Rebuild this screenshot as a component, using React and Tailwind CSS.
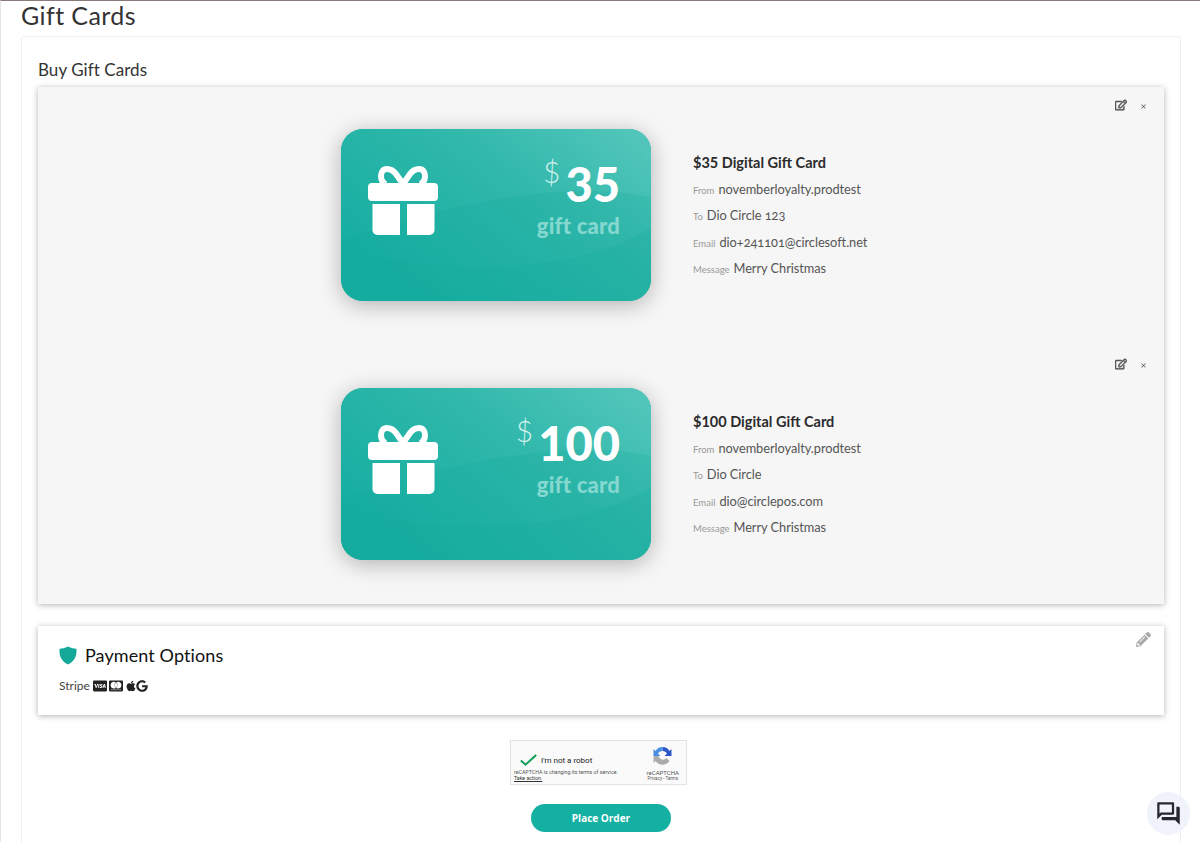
import { FaApple, FaCcMastercard, FaCcVisa, FaGoogle, FaPencilAlt, FaRegEdit } from 'react-icons/fa';
import { MdOutlineQuestionAnswer } from 'react-icons/md';
import { HiX } from 'react-icons/hi';

const cards = [
  { id: 'a', amount: '35', to: 'Dio Circle 123', email: 'dio+241101@circlesoft.net' },
  { id: 'b', amount: '100', to: 'Dio Circle', email: 'dio@circlepos.com' },
];

function InfoLine({ label, value }) {
  return (
    <p className="flex h-[26.3px] items-baseline gap-[4px] text-[12.8px] leading-[26.3px] tracking-[-0.05px] text-[#555]">
      <span className="text-[9.5px] tracking-normal text-[#999]">{label}</span>
      <span className="oldstyle-nums">{value}</span>
    </p>
  );
}

function GiftIcon() {
  return (
    <svg className="absolute left-[27px] top-[37px]" width="70" height="70" viewBox="0 0 70 70" fill="#ffffff">
      <rect x="0" y="17" width="70" height="18" rx="4" />
      <path d="M4.500 38H32V69H9.500A5 5 0 0 1 4.500 64Z" />
      <path d="M39 38H66.500V64A5 5 0 0 1 61.500 69H39Z" />
      <path d="M35 18L28 8C25 4 21 3 19 3C15 3 13 6 13 10C13 14 15 17 18 18" fill="none" stroke="#ffffff" strokeWidth="6" />
      <path d="M35 18L42 8C45 4 49 3 51 3C55 3 57 6 57 10C57 14 55 17 52 18" fill="none" stroke="#ffffff" strokeWidth="6" />
    </svg>
  );
}

function CardArt({ id, amount }) {
  return (
    <div className="relative h-[172px] w-[310px] shrink-0 overflow-hidden rounded-[22px] bg-[#14b0a2] shadow-[0_4px_22px_rgba(0,0,0,0.28)]">
      <svg className="absolute inset-0" width="310" height="172" viewBox="0 0 310 172">
        <defs>
          <linearGradient id={`g-${id}`} x1="0" y1="0.7" x2="1" y2="0">
            <stop offset="0" stopColor="#14aea1" />
            <stop offset="0.55" stopColor="#30b8ab" />
            <stop offset="1" stopColor="#56c7bc" />
          </linearGradient>
        </defs>
        <rect width="310" height="172" fill={`url(#g-${id})`} />
        <path d="M0 112C60 90 150 66 230 62C265 61 290 64 310 68V99C280 118 230 134 170 137C120 140 60 136 0 122Z" fill="#12a99c" fillOpacity="0.22" />
        <path d="M0 122C60 136 120 140 170 137C230 134 280 118 310 99V172H0Z" fill="#12a99c" fillOpacity="0.42" />
      </svg>
      <GiftIcon />
      <div className="absolute right-[31px] top-[31px] flex flex-col items-end text-white">
        <div className="flex items-start">
          <span className="-mt-[7px] mr-[5px] text-[30px] font-light leading-[36px] text-[#d5f2ee]">$</span>
          <span className="text-[47px] font-black leading-[49px]">{amount}</span>
        </div>
        <span className="mt-[2px] text-[22px] font-black leading-[30px] tracking-[0.2px] text-[#85d8cf]">gift card</span>
      </div>
    </div>
  );
}

function CardRow({ id, amount, to, email }) {
  return (
    <div className="h-[259px]">
      <div className="flex h-[42px] items-start justify-end gap-[13px] pr-[17px] pt-[12px] text-[#555]">
        <FaRegEdit size={12} stroke="currentColor" strokeWidth={24} />
        <HiX size={7} className="mt-[4px]" />
      </div>
      <div className="flex pl-[303px]">
        <CardArt id={id} amount={amount} />
        <div className="ml-[42px] pt-[24px]">
          <h3 className="mb-[3px] text-[14.5px] font-bold leading-[20px] text-[#2b2b2b]">${amount} Digital Gift Card</h3>
          <InfoLine label="From" value="novemberloyalty.prodtest" />
          <InfoLine label="To" value={to} />
          <InfoLine label="Email" value={email} />
          <InfoLine label="Message" value="Merry Christmas" />
        </div>
      </div>
    </div>
  );
}

function Captcha() {
  return (
    <div className="ml-[472px] flex h-[45px] w-[177px] justify-between border border-[#e2e2e2] bg-[#fafafa] pl-[3px] pr-[7px] pt-[5px] font-['Roboto',sans-serif]">
      <div>
        <div className="mt-[5px] flex items-center pl-[6px]">
          <svg width="17" height="14" viewBox="0 0 20 15">
            <path d="M1 8l5.500 5L19 1.500" fill="none" stroke="#0f9d58" strokeWidth="2.400" />
          </svg>
          <span className="ml-[4px] mt-[3px] text-[8px] leading-[14px] text-[#222]">I'm not a robot</span>
        </div>
        <p className="mt-[1px] text-[5.25px] leading-[6px] text-[#555]">reCAPTCHA is changing its terms of service.</p>
        <p className="text-[5.25px] leading-[6px] text-[#333] underline">Take action.</p>
      </div>
      <div className="flex flex-col items-center">
        <svg width="19" height="20" viewBox="0 0 18 20">
          <path d="M9 1a8 8 0 0 1 7 4l2-2v7h-7l2.500-2.500A4.500 4.500 0 0 0 9 5Z" fill="#2a56c6" />
          <path d="M9 1a8 8 0 0 0-7 4l-2-2v7h7L4.500 7.500A4.500 4.500 0 0 1 9 5Z" fill="#4a90e2" />
          <path d="M0 10h5a4.500 4.500 0 0 0 8 2l3 3a8.500 8.500 0 0 1-14 0l-2 2Z" fill="#ababab" />
        </svg>
        <span className="mt-[3px] text-[6px] leading-[7px] text-[#555]">reCAPTCHA</span>
        <span className="text-[4.5px] leading-[6px] text-[#555]">Privacy - Terms</span>
      </div>
    </div>
  );
}

export default function App() {
  return (
    <div className="h-[842px] overflow-hidden border-l border-t border-l-[#e5e5e5] border-t-[#8c7a7a] bg-white pl-[20px] pr-[19px] font-['Lato',sans-serif]">
      <h1 className="h-[35px] text-[25px] font-normal leading-[29px] tracking-[0.4px] text-[#333]">Gift Cards</h1>
      <main className="h-[900px] rounded-[3px] border border-[#eeeeee] px-[16px] pt-[21px]">
        <h2 className="h-[29px] text-[17px] leading-[24px] tracking-[0.05px] text-[#333]">Buy Gift Cards</h2>

        <section className="h-[517px] overflow-hidden bg-[#f6f6f6] shadow-[0_1px_6px_rgba(0,0,0,0.3)]">
          {cards.map((c) => (
            <CardRow key={c.id} {...c} />
          ))}
        </section>

        <section className="relative mt-[22px] h-[89px] bg-white pl-[21px] pt-[19px] shadow-[0_1px_6px_rgba(0,0,0,0.3)]">
          <FaPencilAlt size={15} className="absolute right-[13px] top-[6px] text-[#aaa]" />
          <div className="flex items-center">
            <svg width="18" height="19" viewBox="0 0 18 19">
              <path d="M9 0.500C12 2 15 2.500 17.500 3C18 10 15.500 15.500 9 18.500C2.500 15.500 0 10 0.500 3C3 2.500 6 2 9 0.500Z" fill="#14a898" />
            </svg>
            <h3 className="ml-[8px] text-[18px] leading-[21px] tracking-[0.1px] text-[#111]">Payment Options</h3>
          </div>
          <div className="mt-[12px] flex items-center gap-[2px] text-[#222]">
            <span className="mr-[1px] text-[12px] leading-[16px] text-[#444]">Stripe</span>
            <FaCcVisa size={14} />
            <FaCcMastercard size={14} />
            <FaApple size={12} />
            <FaGoogle size={12} className="-ml-[3px]" />
          </div>
        </section>

        <div className="pt-[25px]">
          <Captcha />
          <button className="mx-auto mt-[19px] block h-[28px] w-[140px] rounded-full bg-[#14b0a2] font-['Open_Sans',sans-serif] text-[10px] font-bold text-white">
            Place Order
          </button>
        </div>
      </main>
      <button className="fixed bottom-[7px] right-[10px] flex h-[43px] w-[43px] items-center justify-center rounded-full bg-[#f0f3fb] text-[#26262c]">
        <MdOutlineQuestionAnswer size={27} />
      </button>
    </div>
  );
}
